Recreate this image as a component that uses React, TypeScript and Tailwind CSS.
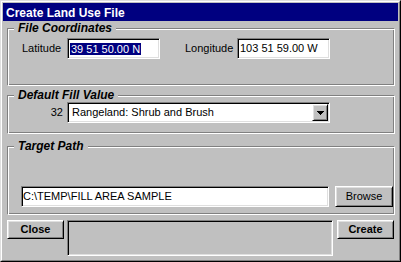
const sunken = "border border-t-[#808080] border-l-[#808080] border-b-white border-r-white shadow-[inset_1px_1px_0_#000,inset_-1px_-1px_0_#dfdfdf]";
const raised = "border border-t-white border-l-white border-b-black border-r-black shadow-[inset_1px_1px_0_#dfdfdf,inset_-1px_-1px_0_#808080]";
const etched = "border border-t-[#808080] border-l-[#808080] border-b-white border-r-white shadow-[inset_1px_1px_0_#fff,inset_-1px_-1px_0_#808080]";

function Group({ title, className, children }: { title: string; className: string; children: React.ReactNode }) {
  return (
    <div className={`ml-[4px] mr-[3px] flex flex-col ${etched} ${className}`}>
      <div className="-mt-[8px] ml-[6px] w-fit bg-[#c0c0c0] px-[4px] text-[12px] leading-[14px] font-bold italic">{title}</div>
      {children}
    </div>
  );
}

function DownArrow() {
  return (
    <svg width="7" height="4" viewBox="0 0 7 4" shapeRendering="crispEdges">
      <rect x="0" y="0" width="7" height="1" fill="#000" />
      <rect x="1" y="1" width="5" height="1" fill="#000" />
      <rect x="2" y="2" width="3" height="1" fill="#000" />
      <rect x="3" y="3" width="1" height="1" fill="#000" />
    </svg>
  );
}

export default function App() {
  return (
    <div className="h-[262px] w-[401px] border border-t-[#dfdfdf] border-l-[#dfdfdf] border-b-black border-r-black bg-[#c0c0c0] font-['Liberation_Sans',Arial,sans-serif] text-[11px] leading-[13px] text-black">
      <div className="flex h-full flex-col border border-t-white border-l-white border-b-[#808080] border-r-[#808080] p-[1px]">
        <div className="h-[18px] bg-[#000080] pl-[3px] pt-[1px] text-[12px] leading-[18px] font-bold text-white">Create Land Use File</div>

        <Group title="File Coordinates" className="mt-[7px] h-[58px]">
          <div className="mt-[3px] flex items-center pl-[14px]">
            <span className="w-[45px]">Latitude</span>
            <div className={`flex h-[21px] w-[93px] items-center bg-white pl-[2px] ${sunken}`}>
              <span className="bg-[#000080] px-[1px] leading-[12px] text-white">39 51 50.00 N</span>
            </div>
            <span className="ml-[25px] w-[52px]">Longitude</span>
            <div className={`flex h-[21px] w-[93px] items-center bg-white pl-[2px] ${sunken}`}>103 51 59.00 W</div>
          </div>
        </Group>

        <Group title="Default Fill Value" className="mt-[9px] h-[39px]">
          <div className="flex items-center">
            <span className="w-[59px] pr-[4px] text-right">32</span>
            <div className={`flex h-[21px] w-[263px] items-stretch bg-white p-[1px] ${sunken}`}>
              <div className="flex flex-1 items-center pl-[3px]">Rangeland: Shrub and Brush</div>
              <div className={`flex w-[16px] items-center justify-center bg-[#c0c0c0] ${raised}`}>
                <DownArrow />
              </div>
            </div>
          </div>
        </Group>

        <Group title="Target Path" className="mt-[12px] h-[69px]">
          <div className="mt-[33px] flex items-center pl-[13px]">
            <div className={`flex h-[21px] w-[308px] items-center bg-white pl-[1px] ${sunken}`}>C:\TEMP\FILL AREA SAMPLE</div>
            <button className={`ml-[6px] flex h-[21px] w-[58px] items-center justify-center bg-[#c0c0c0] ${raised}`}>Browse</button>
          </div>
        </Group>

        <div className="ml-[4px] mt-[5px] flex items-start">
          <button className={`flex h-[19px] w-[57px] items-center justify-center bg-[#c0c0c0] font-bold ${raised}`}>Close</button>
          <div className={`ml-[3px] h-[36px] w-[266px] bg-[#c0c0c0] ${sunken}`} />
          <button className={`ml-[4px] flex h-[19px] w-[57px] items-center justify-center bg-[#c0c0c0] font-bold ${raised}`}>Create</button>
        </div>
      </div>
    </div>
  );
}
